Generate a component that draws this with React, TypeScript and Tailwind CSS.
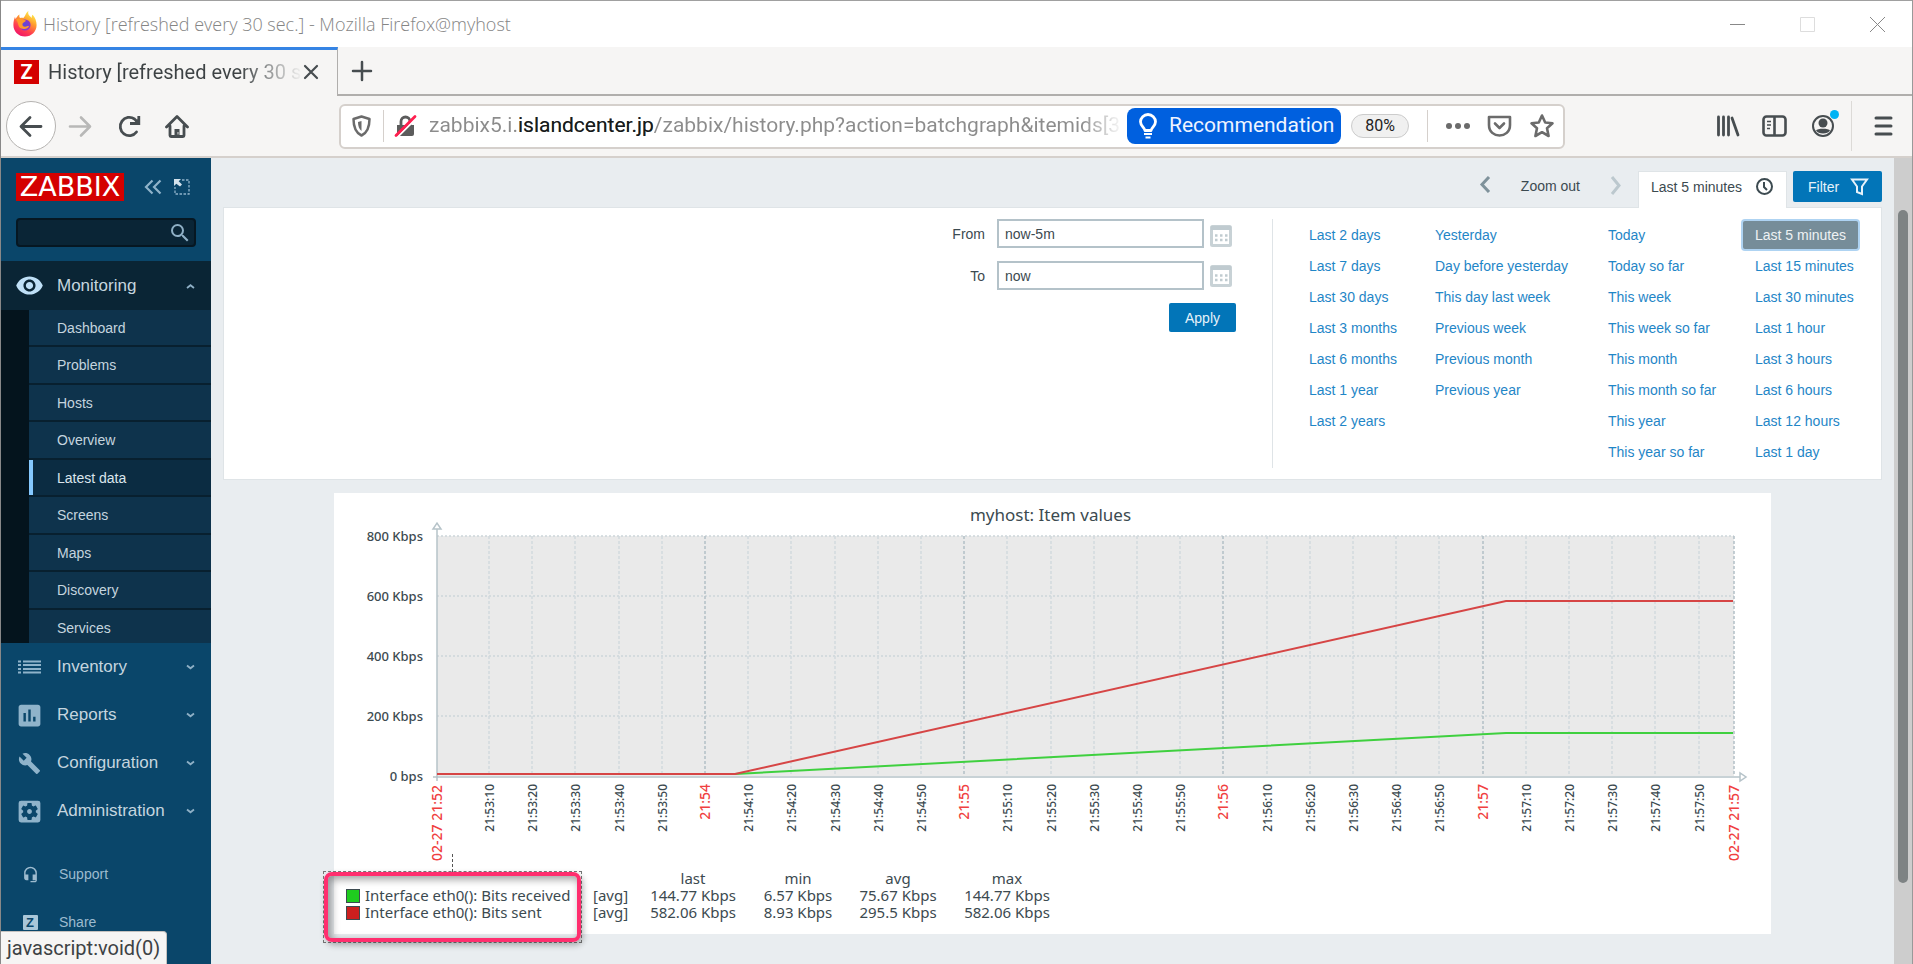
import { useState } from 'react';
import { MdAssessment, MdBuild, MdHeadsetMic, MdSearch, MdSettingsApplications, MdVisibility } from 'react-icons/md';

const submenu = ['Dashboard', 'Problems', 'Hosts', 'Overview', 'Latest data', 'Screens', 'Maps', 'Discovery', 'Services'];

const ranges = [
    { width: 'w-[126px]', items: ['Last 2 days', 'Last 7 days', 'Last 30 days', 'Last 3 months', 'Last 6 months', 'Last 1 year', 'Last 2 years'] },
    { width: 'w-[173px]', items: ['Yesterday', 'Day before yesterday', 'This day last week', 'Previous week', 'Previous month', 'Previous year'] },
    { width: 'w-[147px]', items: ['Today', 'Today so far', 'This week', 'This week so far', 'This month', 'This month so far', 'This year', 'This year so far'] },
    { width: 'w-[126px]', items: ['Last 5 minutes', 'Last 15 minutes', 'Last 30 minutes', 'Last 1 hour', 'Last 3 hours', 'Last 6 hours', 'Last 12 hours', 'Last 1 day'] },
];

const legend = [
    { name: 'Interface eth0(): Bits received', color: 'bg-[#1fcc1f]', values: ['144.77 Kbps', '6.57 Kbps', '75.67 Kbps', '144.77 Kbps'] },
    { name: 'Interface eth0(): Bits sent', color: 'bg-[#cc1f1f]', values: ['582.06 Kbps', '8.93 Kbps', '295.5 Kbps', '582.06 Kbps'] },
];

const FirefoxLogo = () => (
    <svg width="24" height="26" viewBox="0 0 24 26" aria-hidden="true">
        <defs>
            <linearGradient id="fx-body" x1="0.8" y1="0.05" x2="0.3" y2="1">
                <stop offset="0" stopColor="#fff44f" />
                <stop offset="0.35" stopColor="#ffa02e" />
                <stop offset="0.7" stopColor="#ff3f4f" />
                <stop offset="1" stopColor="#f0136b" />
            </linearGradient>
            <radialGradient id="fx-globe">
                <stop offset="0" stopColor="#5a4bd8" />
                <stop offset="1" stopColor="#8e35c8" />
            </radialGradient>
        </defs>
        <path fill="url(#fx-body)" d="M15.500 0c-1 2.600.2 4.200 2 5.800L18.800 7c-.2-1.500.2-2.500.8-3.200 2.600 2.600 4 6.500 4 10.200C23.600 20.600 18.600 25.500 12 25.500S.4 20.600.4 14c0-3.400.8-6.200 1.600-8.200.1 1 .3 1.700.7 2.300.8-1.800 2.200-3.700 3.800-4.600-.4 1.400-.2 2.700.6 3.500 1-.4 2.200-.4 3.200 0C12.500 5.500 12.300 2.200 15.500 0z" />
        <circle cx="12" cy="14" r="5.600" fill="url(#fx-globe)" />
        <path fill="#ff9a2a" d="M3 8.500c2-1.600 5-1.400 6.800.4 1 .1 2.500 0 3 .6.300 1.200-2.600 1.600-3.300 3.200-.4 1.800.8 3 2.600 3 1.600 0 2.700-.8 4-.6-1.200 3.400-7.600 4.200-10.200.4-.8-2.500-1.200-5-2.900-7z" />
    </svg>
);

const TitleBar = () => (
    <header className="flex h-[47px] shrink-0 items-center border-t border-[#a0a0a0] bg-white pl-3 text-[#858585]">
        <FirefoxLogo />
        <span className="ml-1.5 flex-1 font-['Open_Sans',sans-serif] text-[18px] font-light">History [refreshed every 30 sec.] - Mozilla Firefox@myhost</span>
        <button aria-label="Minimize" className="flex w-[70px] justify-center">
            <svg width="15" height="15" stroke="#888" fill="none"><path d="M0 7.500h15" /></svg>
        </button>
        <button aria-label="Maximize" className="flex w-[70px] justify-center">
            <svg width="15" height="15" stroke="#ddd" fill="none"><path d="M.5.5h14v14H.5z" /></svg>
        </button>
        <button aria-label="Close window" className="flex w-[70px] justify-center">
            <svg width="15" height="15" stroke="#888" fill="none"><path d="M0 0l15 15M15 0L0 15" /></svg>
        </button>
    </header>
);

const TabStrip = () => (
    <div className="flex h-[49px] shrink-0 bg-[#f6f5f4]">
        <div className="flex w-[337px] items-center border-t-[3px] border-r border-t-[#3584e4] border-r-[#b0aeac] pb-0.5 pl-[13px]">
            <span className="flex h-6 w-[25px] items-center justify-center bg-[#d40000] text-[20px] font-bold text-white">Z</span>
            <span className="ml-[9px] min-w-0 flex-1 bg-linear-to-r from-[#3d4244] from-75% to-transparent bg-clip-text text-xl whitespace-nowrap text-transparent">History [refreshed every 30 s</span>
            <button aria-label="Close tab" className="mr-[18px]">
                <svg width="16" height="16" stroke="#474d50" strokeWidth="2.200" fill="none" strokeLinecap="round"><path d="M2 2l12 12M14 2L2 14" /></svg>
            </button>
        </div>
        <div className="flex flex-1 items-center border-b-2 border-[#b0aeac] pl-[13px]">
            <button aria-label="New tab">
                <svg width="22" height="22" stroke="#474d50" strokeWidth="2.500" fill="none" strokeLinecap="round"><path d="M11 2v18M2 11h18" /></svg>
            </button>
        </div>
    </div>
);

const Toolbar = () => (
    <nav className="flex h-[62px] shrink-0 items-center border-b-2 border-[#d5d0cc] bg-[#f6f5f4] pl-[5px] text-[#474d50]">
        <button aria-label="Back" className="flex h-[50px] w-[50px] items-center justify-center rounded-full border border-[#b5b3b1] bg-white">
            <svg width="24" height="24" stroke="currentColor" strokeWidth="2.800" fill="none" strokeLinecap="round" strokeLinejoin="round"><path d="M22 12.500H2.500M11 3.500L2 12.500l9 9" /></svg>
        </button>
        <button aria-label="Forward" className="ml-3 text-[#b8b8b7]">
            <svg width="24" height="24" stroke="currentColor" strokeWidth="2.600" fill="none" strokeLinecap="round" strokeLinejoin="round"><path d="M2 12.500h19.500M13 3.500l9 9-9 9" /></svg>
        </button>
        <button aria-label="Reload" className="ml-[25px]">
            <svg width="24" height="24" fill="none" stroke="currentColor" strokeWidth="2.800"><path d="M19.500 18A9 9.200 0 1 1 17.500 5l3 3" strokeLinecap="round" /><path d="M13 9.500h8.800V2" /><path d="M21.800 4v6h-6z" fill="currentColor" stroke="none" /></svg>
        </button>
        <button aria-label="Home" className="ml-6">
            <svg width="24" height="24" fill="none" stroke="currentColor" strokeWidth="2.800" strokeLinecap="round" strokeLinejoin="round"><path d="M1.500 13L12 2.500 22.500 13M5 12v9.500q0 1 1 1h12q1 0 1-1V12" /><path d="M12 22.500v-7.500" strokeWidth="5" strokeLinecap="butt" /><path d="M13 18v2.500" stroke="#c8c8c8" strokeWidth="1.200" strokeLinecap="butt" /></svg>
        </button>
        <div className="mr-[151px] ml-[150px] flex h-[45px] min-w-0 flex-1 items-center rounded-md border-2 border-[#d5d0cc] bg-white pl-[11px]">
            <svg className="shrink-0" width="19" height="22" fill="none" stroke="#6b6b6b" strokeWidth="2.500"><path d="M9.500 1.500L17.500 4c0 8-1.500 13.500-8 16.500C3 17.500 1.500 12 1.500 4z" strokeLinejoin="round" /><path d="M9.500 6v10c-2.500-2-3.500-5-3.500-9z" fill="#6b6b6b" stroke="none" /></svg>
            <span className="ml-3 h-8 w-px shrink-0 bg-[#d5d0cc]" />
            <svg className="ml-2.5 shrink-0" width="23" height="24"><path d="M3 11h17v9q0 2-2 2H3z" fill="#5c5c5c" /><path d="M7 11V7.500a4.500 4.500 0 0 1 9 0V11" fill="none" stroke="#5c5c5c" strokeWidth="2.800" /><path d="M3 23.500L22.500 4" stroke="#fff" strokeWidth="2" /><path d="M2 21.500L21 2.500" stroke="#ff1f4f" strokeWidth="2.800" strokeLinecap="round" /></svg>
            <span className="ml-3 min-w-0 flex-1 bg-linear-to-r from-[#8c8c8c] from-94% to-transparent bg-clip-text text-[21px] whitespace-nowrap text-transparent">
                zabbix5.i.<span className="text-[#16191a]">islandcenter.jp</span>/zabbix/history.php?action=batchgraph&amp;itemids[3
            </span>
            <button className="ml-1 flex h-9 w-[214px] items-center rounded-lg bg-[#0060df] pl-2.5 text-[21px] text-[#eef4ff]">
                <svg width="22" height="26" fill="none" stroke="#fff" strokeWidth="2.800"><path d="M8 17.500C7.500 14.500 3.500 13 3.500 8.800a7.500 7.300 0 0 1 15 0C18.500 13 14.500 14.500 14 17.500z" strokeLinejoin="round" /><path d="M7 21h8M8.500 24.500h5" strokeWidth="2" /></svg>
                <span className="ml-2.5">Recommendation</span>
            </button>
            <button className="ml-2.5 h-6 w-[58px] rounded-full border border-[#ccc] bg-[#f0f0f0] text-base leading-5 text-[#222]">80%</button>
            <span className="ml-[18px] h-8 w-px bg-[#d5d0cc]" />
            <button aria-label="Page actions" className="ml-[17px]">
                <svg width="26" height="8" fill="#6b6b6b"><circle cx="4" cy="4" r="3" /><circle cx="13" cy="4" r="3" /><circle cx="22" cy="4" r="3" /></svg>
            </button>
            <button aria-label="Save to Pocket" className="ml-4">
                <svg width="25" height="22" fill="none" stroke="#6b6b6b" strokeWidth="2.600" strokeLinecap="round" strokeLinejoin="round"><path d="M2 2h21v8c0 14-21 14-21 0z" /><path d="M8 8.500l4.500 4.500L17 8.500" /></svg>
            </button>
            <button aria-label="Bookmark" className="mr-2 ml-[17px]">
                <svg width="26" height="26" viewBox="0 0 26 26" fill="none" stroke="#6b6b6b" strokeWidth="2.600" strokeLinejoin="round"><path d="M13 2.500l3.200 7 7.300.8-5.500 5 1.600 7.700L13 19.200 6.400 23 8 15.300l-5.500-5 7.300-.8z" /></svg>
            </button>
        </div>
        <button aria-label="Library">
            <svg width="24" height="22" fill="none" stroke="currentColor" strokeWidth="2.800" strokeLinecap="round"><path d="M2.500 2v18M7.500 2v18M12.500 2v18M16 3l6 17" /></svg>
        </button>
        <button aria-label="Sidebars" className="ml-[22px]">
            <svg width="25" height="22" fill="none" stroke="currentColor" strokeWidth="2.600"><rect x="1.500" y="1.500" width="22" height="19" rx="3" /><path d="M12.500 2v18" /><path d="M5 6.500h4M5 10h4M5 13.500h3" strokeWidth="1.500" /></svg>
        </button>
        <button aria-label="Account" className="relative ml-6">
            <svg width="24" height="24" fill="none"><circle cx="12" cy="12" r="10" stroke="currentColor" strokeWidth="2" /><circle cx="12" cy="9" r="4.500" fill="currentColor" /><path d="M5 16.500c1-2.500 13-2.500 14 0-2 4-12 4-14 0z" fill="currentColor" /></svg>
            <span className="absolute -top-1 -right-1 h-[9px] w-[9px] rounded-full bg-[#00b3f4]" />
        </button>
        <span className="ml-4 h-[50px] w-px bg-[#dcdad7]" />
        <button aria-label="Open menu" className="mr-[19px] ml-[22px]">
            <svg width="19" height="20" fill="none" stroke="currentColor" strokeWidth="3" strokeLinecap="round"><path d="M2 2h15M2 10h15M2 18h15" /></svg>
        </button>
    </nav>
);

const Chevron = ({ up = false }: { up?: boolean }) => (
    <svg className="mr-4 ml-auto" width="9" height="6" fill="none" stroke="#8fb0c6" strokeWidth="1.800"><path d={up ? 'M1 5l3.500-2.800L8 5' : 'M1 1.500l3.500 2.800L8 1.500'} /></svg>
);

const ListIcon = () => (
    <svg width="23" height="14" stroke="#8fb3ca" strokeWidth="2"><path d="M0 1.500h3M5 1.500h18M0 5h3M5 5h18M0 9h3M5 9h18M0 12.500h3M5 12.500h18" /></svg>
);

const mainMenu = [
    { label: 'Inventory', icon: <ListIcon /> },
    { label: 'Reports', icon: <MdAssessment size={29} /> },
    { label: 'Configuration', icon: <MdBuild size={23} /> },
    { label: 'Administration', icon: <MdSettingsApplications size={29} /> },
];

const Sidebar = () => (
    <aside className="w-[210px] shrink-0 overflow-hidden bg-[#0a466a] text-[#c5d5df]">
        <div className="flex items-center pt-[15px] pl-[15px]">
            <a href="#zabbix" className="flex h-7 w-[108px] items-center justify-center bg-[#d40000] pt-px font-['DejaVu_Sans',sans-serif] text-[27px] text-white">ZABBIX</a>
            <button aria-label="Collapse sidebar" className="ml-5">
                <svg width="18" height="16" fill="none" stroke="#8fb3ca" strokeWidth="2.200"><path d="M8.500 1.500L2 8l6.500 6.500M16.500 1.500L10 8l6.500 6.500" /></svg>
            </button>
            <button aria-label="Hide sidebar" className="ml-3">
                <svg width="16" height="16" fill="none" stroke="#8fb3ca" strokeWidth="1.300"><path d="M8 1h7v14H1V8" strokeDasharray="2.500 1.500" /><path d="M0 0h7L4.700 2.300 8 5.500 6 7.500 2.300 4.700 0 7z" fill="#d3e2ec" stroke="none" /></svg>
            </button>
        </div>
        <div className="mt-[17px] mr-[15px] ml-[15px] flex h-[29px] items-center rounded-sm border-2 border-[#061722] bg-[#0a2536]">
            <input aria-label="Search" className="min-w-0 flex-1 bg-transparent px-2 text-sm outline-none" />
            <MdSearch size={24} className="mr-0.5 shrink-0 text-[#8fb0c6]" />
        </div>
        <button className="mt-3.5 flex h-[49px] w-full items-center bg-[#0a2535] text-[17px]">
            <span className="flex w-14 justify-center text-[#bfe0f7]"><MdVisibility size={29} /></span>
            <span>Monitoring</span>
            <Chevron up />
        </button>
        <ul className="border-l-[28px] border-[#04141d] text-sm">
            {submenu.map(item => (
                <li key={item} className="overflow-hidden border-b-2 border-[#08202f] leading-9 odd:h-[37px] even:h-[38px] last:h-[33px]! last:border-b-0">
                    <a href="#menu" className={item === 'Latest data' ? 'block border-l-4 border-[#85c9ff] bg-[#0b2c42] pl-6 text-[#dbe6ed]' : 'block bg-[#0e334c] pl-7'}>{item}</a>
                </li>
            ))}
        </ul>
        {mainMenu.map(m => (
            <button key={m.label} className="flex h-12 w-full items-center text-[17px]">
                <span className="flex w-14 justify-center text-[#8fb3ca]">{m.icon}</span>
                <span>{m.label}</span>
                <Chevron />
            </button>
        ))}
        <a href="#support" className="mt-[15px] flex h-12 items-center text-sm text-[#9dbbcf]">
            <span className="flex w-[58px] justify-center"><MdHeadsetMic size={17} /></span>
            Support
        </a>
        <a href="#share" className="flex h-12 items-center text-sm text-[#9dbbcf]">
            <span className="flex w-[58px] justify-center">
                <span className="flex h-[15px] w-[15px] items-center justify-center rounded-[1px] bg-[#a9c6d8] text-[13px] leading-none font-bold text-[#0a466a]">Z</span>
            </span>
            Share
        </a>
    </aside>
);

const CalendarIcon = () => (
    <svg width="22" height="22" fill="none"><rect x="1.500" y="1.500" width="19" height="19" rx="1" stroke="#c8d2d6" strokeWidth="3" /><path d="M1 1h20v4H1z" fill="#c0cbd0" /><path d="M5 10.500h13M5 15h13" stroke="#c0cbd0" strokeWidth="2.500" strokeDasharray="2.500 2.500" /></svg>
);

const TimeFilter = () => {
    const [from, setFrom] = useState('now-5m');
    const [to, setTo] = useState('now');
    const [range, setRange] = useState('Last 5 minutes');

    return (
        <section className="mx-3 text-sm text-[#3c4a50]">
            <div className="flex h-[49px] items-end justify-end">
                <button aria-label="Previous period" className="mb-3.5">
                    <svg width="12" height="17" fill="none" stroke="#7f929b" strokeWidth="3"><path d="M10 1L3 8.500l7 7.500" /></svg>
                </button>
                <button className="mx-[30px] mb-[11px]">Zoom out</button>
                <button aria-label="Next period" className="mb-3">
                    <svg width="12" height="19" fill="none" stroke="#bcc8ce" strokeWidth="3"><path d="M2 1l7 8.500L2 18" /></svg>
                </button>
                <button className="relative z-10 -mb-px ml-4 flex h-[37px] w-[149px] items-center border border-b-0 border-[#dfe4e7] bg-white pb-[7px] pl-3">
                    Last 5 minutes
                    <svg className="ml-[13px]" width="19" height="19" fill="none" stroke="#3c4a50" strokeWidth="2"><circle cx="9.500" cy="9.500" r="7.500" /><path d="M9 5v5l3 3" /></svg>
                </button>
                <button className="mb-[5px] ml-1.5 flex h-[31px] w-[89px] items-center rounded-xs bg-[#0275b8] pl-[15px] text-[#e6f2fa]">
                    Filter
                    <svg className="ml-[11px]" width="19" height="18" fill="none" stroke="#e6f2fa" strokeWidth="2"><path d="M2 1.500h15l-5 7V16l-5-2V8.500z" /></svg>
                </button>
            </div>
            <div className="flex justify-end border border-[#dfe4e7] bg-white pt-[11px] pr-3 pb-[11px]">
                <form className="flex flex-col items-end gap-[13px] pr-9" onSubmit={e => e.preventDefault()}>
                    <div className="flex h-[29px] items-center">
                        <label htmlFor="from">From</label>
                        <input id="from" value={from} onChange={e => setFrom(e.target.value)} className="ml-3 h-full w-[207px] border-2 border-[#b4c2c9] px-1.5" />
                        <button type="button" aria-label="Pick start date" className="mt-1 ml-1.5 w-[26px]"><CalendarIcon /></button>
                    </div>
                    <div className="flex h-[29px] items-center">
                        <label htmlFor="to">To</label>
                        <input id="to" value={to} onChange={e => setTo(e.target.value)} className="ml-3 h-full w-[207px] border-2 border-[#b4c2c9] px-1.5" />
                        <button type="button" aria-label="Pick end date" className="ml-1.5 w-[26px]"><CalendarIcon /></button>
                    </div>
                    <button type="submit" className="h-[29px] w-[67px] rounded-xs bg-[#0275b8] text-[#e6f2fa]">Apply</button>
                </form>
                <div className="flex border-l border-[#dfe4e7] pl-6">
                    {ranges.map(col => (
                        <ul key={col.items[0]} className={`grid h-[249px] grid-rows-8 ${col.width}`}>
                            {col.items.map(item => (
                                <li key={item} className="flex items-center">
                                    <button
                                        onClick={() => setRange(item)}
                                        className={item === range ? 'h-7 rounded-xs bg-[#768d99] px-3 text-[#eef2f4] ring-2 ring-[#aed3f2]' : 'px-3 text-[#1f86c7]'}
                                    >
                                        {item}
                                    </button>
                                </li>
                            ))}
                        </ul>
                    ))}
                </div>
            </div>
        </section>
    );
};

const LEFT = 103;
const RIGHT = 1400;
const TOP = 15;
const BOTTOM = 255;
const FIRST_TICK = 155;
const TICK_STEP = 43.2;

const ticks = Array.from({ length: 29 }, (_, i) => {
    const seconds = (i + 1) * 10;
    const minute = 53 + Math.floor(seconds / 60);
    const rest = seconds % 60;
    return { x: Math.round(FIRST_TICK + i * TICK_STEP), label: rest ? `21:${minute}:${rest}` : `21:${minute}`, major: rest === 0 };
});

const GraphPlot = () => (
    <svg className="-mt-1.5 block max-w-full" viewBox="0 0 1437 349" fill="none" role="img" aria-label="myhost: Item values">
        <rect x={LEFT} y={TOP} width={RIGHT - LEFT} height={BOTTOM - TOP} fill="#eaeaea" />
        {[0, 1, 2, 3].map(i => (
            <path key={i} d={`M${LEFT} ${TOP + i * 60}H${RIGHT}`} stroke="#cdd6da" strokeWidth="1.500" strokeDasharray="2 2" />
        ))}
        {ticks.map(t => (
            <path key={t.label} d={`M${t.x} ${TOP}V${BOTTOM}`} stroke={t.major ? '#b3c0c6' : '#d2dade'} strokeWidth="1.500" strokeDasharray="3 2" />
        ))}
        <path d={`M${RIGHT} ${TOP}V${BOTTOM}`} stroke="#b3c0c6" strokeWidth="1.500" strokeDasharray="3 2" />
        <path d={`M${LEFT} 8V260M99 ${BOTTOM + 1}H1406`} stroke="#b6c3c9" strokeWidth="1.500" />
        <path d="M99 8h8l-4-6zM1406 252v8l6-4z" fill="#fff" stroke="#b6c3c9" strokeWidth="1.500" />
        <path d={`M${LEFT} 253H401L1172 212H1399`} stroke="#3fd03f" strokeWidth="2" />
        <path d={`M${LEFT} 253H401L1172 80H1399`} stroke="#d64545" strokeWidth="2" />
        <g fill="#3c4a50" fontSize="13" fontWeight="500" textAnchor="end">
            {['800 Kbps', '600 Kbps', '400 Kbps', '200 Kbps', '0 bps'].map((label, i) => (
                <text key={label} x="89" y={20 + i * 60}>{label}</text>
            ))}
        </g>
        {ticks.map(t => (
            <text key={t.label} transform={`translate(${t.x + 5} 263) rotate(-90)`} textAnchor="end" fontSize={t.major ? 14 : 12} fontWeight="500" fill={t.major ? '#f04040' : '#3c4a50'}>{t.label}</text>
        ))}
        <g fill="#f04040" fontSize="14" fontWeight="500" textAnchor="end">
            <text transform={`translate(${LEFT + 5} 264) rotate(-90)`}>02-27 21:52</text>
            <text transform={`translate(${RIGHT + 5} 264) rotate(-90)`}>02-27 21:57</text>
        </g>
    </svg>
);

const Graph = () => (
    <section className="relative mx-auto mt-[13px] w-[1437px] max-w-full bg-white pb-[13px] font-['Noto_Sans',sans-serif] text-[#3c4a50]">
        <h2 className="pt-2.5 pr-1 text-center text-[17px] leading-6">myhost: Item values</h2>
        <GraphPlot />
        <table className="ml-3 table-fixed text-[15px] leading-[17px]">
            <colgroup>
                <col className="w-[247px]" />
                <col className="w-12" />
                <col className="w-[104px]" />
                <col className="w-[106px]" />
                <col className="w-[94px]" />
                <col className="w-[124px]" />
            </colgroup>
            <thead>
                <tr>
                    <td />
                    <td />
                    {['last', 'min', 'avg', 'max'].map(h => <th key={h} className="font-normal">{h}</th>)}
                </tr>
            </thead>
            <tbody>
                {legend.map(row => (
                    <tr key={row.name}>
                        <td>
                            <span className="flex items-center gap-[5px]">
                                <span className={`h-3.5 w-3.5 border border-[#3c4a50] ${row.color}`} />
                                {row.name}
                            </span>
                        </td>
                        <td>[avg]</td>
                        {row.values.map((v, i) => <td key={i} className="text-center whitespace-nowrap">{v}</td>)}
                    </tr>
                ))}
            </tbody>
        </table>
        {/* highlight over the legend */}
        <div className="pointer-events-none absolute -bottom-[9px] -left-[11px] h-[72px] w-[259px] border border-dashed border-[#777]">
            <div className="absolute -top-[18px] left-32 h-[18px] border-l border-dashed border-[#555]" />
            <div className="h-full w-full rounded-lg border-4 border-[#ff2e6e] shadow-[2px_3px_6px_rgba(0,0,0,0.3),inset_3px_3px_8px_rgba(0,0,0,0.4)]" />
        </div>
    </section>
);

export default function App() {
    return (
        <div className="relative flex h-screen flex-col overflow-hidden border-x border-l-[#888] border-r-[#999] font-['Roboto',sans-serif]">
            <TitleBar />
            <TabStrip />
            <Toolbar />
            <div className="flex min-h-0 flex-1 bg-[#e9edf0] font-['Liberation_Sans',Arial,sans-serif]">
                <Sidebar />
                <main className="min-w-0 flex-1 overflow-hidden">
                    <TimeFilter />
                    <Graph />
                </main>
                <div className="w-[18px] shrink-0 bg-[#cdcdcd] pt-[52px]">
                    <div className="mx-auto h-[673px] w-2.5 rounded-full bg-[#7e8384]" />
                </div>
            </div>
            <div className="absolute bottom-0 left-0 h-[33px] rounded-tr border-t border-r border-[#c5c2bf] bg-[#f6f5f4] px-1.5 text-xl leading-8 text-[#3d4244]">javascript:void(0)</div>
        </div>
    );
}
